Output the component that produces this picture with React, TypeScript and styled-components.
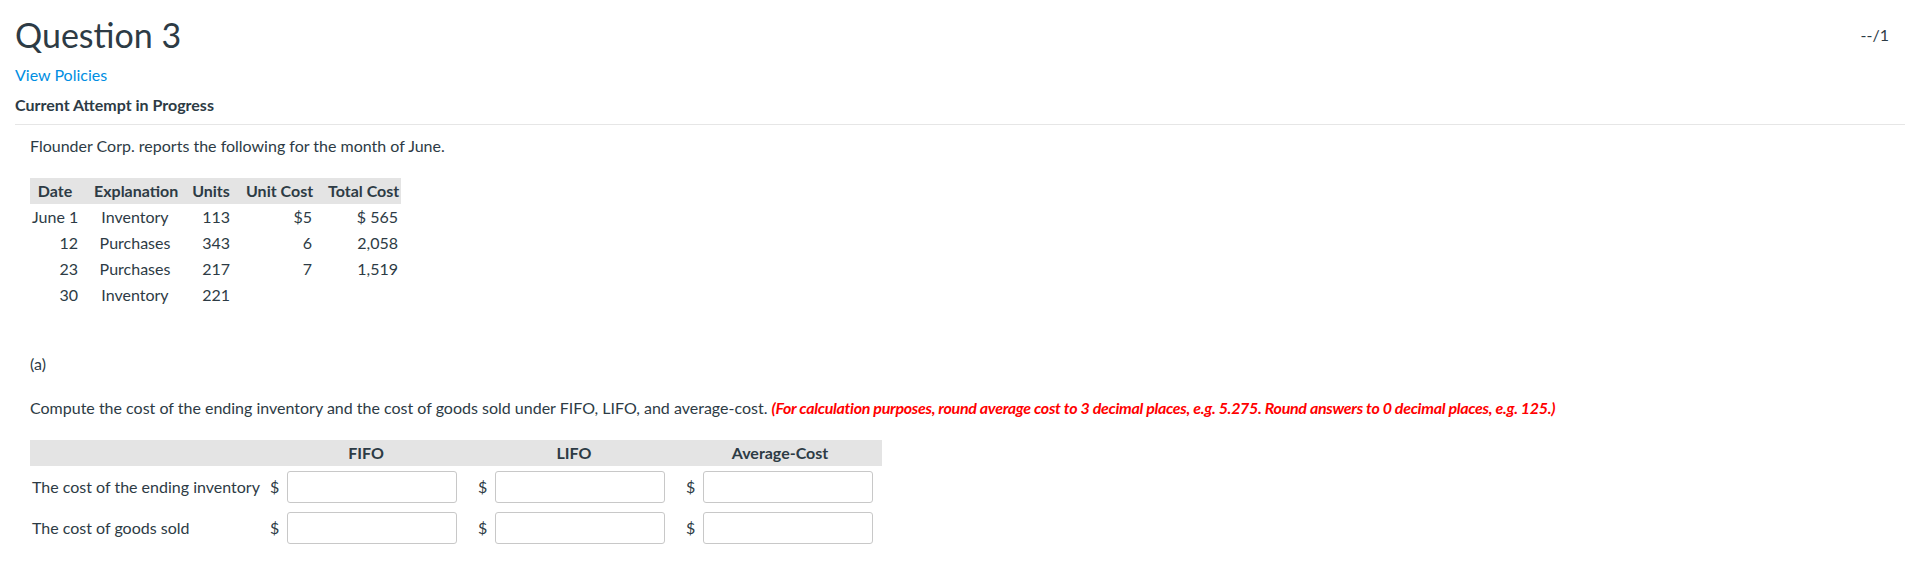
import styled, { createGlobalStyle } from "styled-components";

const GlobalStyle = createGlobalStyle`
    body {
        margin: 0;
        background: #ffffff;
        font-family: Lato, "Noto Sans", sans-serif;
        color: #2d3b45;
    }
`;

type Align = "left" | "center" | "right";

const inventoryRows = [
    { date: "June 1", explanation: "Inventory", units: "113", unitCost: "$5", totalCost: "$ 565" },
    { date: "12", explanation: "Purchases", units: "343", unitCost: "6", totalCost: "2,058" },
    { date: "23", explanation: "Purchases", units: "217", unitCost: "7", totalCost: "1,519" },
    { date: "30", explanation: "Inventory", units: "221", unitCost: "", totalCost: "" },
];

const answerRows = ["The cost of the ending inventory", "The cost of goods sold"];
const methods = ["FIFO", "LIFO", "Average-Cost"];

export default function App() {
    return (
        <>
            <GlobalStyle />
            <Page>
                <HeaderRow>
                    <Title>Question 3</Title>
                    <Points>--/1</Points>
                </HeaderRow>
                <PolicyLink href="#">View Policies</PolicyLink>
                <AttemptStatus>Current Attempt in Progress</AttemptStatus>
                <Divider />

                <QuestionBody>
                    <Paragraph>Flounder Corp. reports the following for the month of June.</Paragraph>

                    <DataTable>
                        <thead>
                            <tr>
                                <HeadCell $w={56} $pl={2} $pr={8}>Date</HeadCell>
                                <HeadCell $w={98} $pl={8} $pr={8}>Explanation</HeadCell>
                                <HeadCell $w={54} $pl={8} $pr={8}>Units</HeadCell>
                                <HeadCell $w={82} $pl={8} $pr={8}>Unit Cost</HeadCell>
                                <HeadCell $w={81} $pl={8} $pr={3}>Total Cost</HeadCell>
                            </tr>
                        </thead>
                        <tbody>
                            {inventoryRows.map((row, i) => (
                                <tr key={i}>
                                    <BodyCell $align="right" $pl={2} $pr={8}>{row.date}</BodyCell>
                                    <BodyCell $align="center" $pl={8} $pr={8}>{row.explanation}</BodyCell>
                                    <BodyCell $align="right" $pl={8} $pr={8}>{row.units}</BodyCell>
                                    <BodyCell $align="right" $pl={8} $pr={8}>{row.unitCost}</BodyCell>
                                    <BodyCell $align="right" $pl={8} $pr={3}>{row.totalCost}</BodyCell>
                                </tr>
                            ))}
                        </tbody>
                    </DataTable>

                    <PartLabel>(a)</PartLabel>

                    <Instructions>
                        Compute the cost of the ending inventory and the cost of goods sold under FIFO, LIFO, and average-cost.{" "}
                        <Hint>(For calculation purposes, round average cost to 3 decimal places, e.g. 5.275. Round answers to 0 decimal places, e.g. 125.)</Hint>
                    </Instructions>

                    <AnswerGrid>
                        <AnswerHead />
                        {methods.map((m) => (
                            <AnswerHead key={m}>{m}</AnswerHead>
                        ))}
                        {answerRows.map((label) => (
                            <AnswerRow key={label}>
                                <RowLabel>{label}</RowLabel>
                                {methods.map((m) => (
                                    <AnswerCell key={m}>
                                        <Dollar>$</Dollar>
                                        <AmountInput type="text" aria-label={`${label} ${m}`} />
                                    </AnswerCell>
                                ))}
                            </AnswerRow>
                        ))}
                    </AnswerGrid>
                </QuestionBody>
            </Page>
        </>
    );
}

const Page = styled.div`
    padding: 15px 15px 30px 15px;
    display: flex;
    flex-direction: column;
    align-items: flex-start;
`;

const HeaderRow = styled.div`
    width: 100%;
    display: flex;
    justify-content: space-between;
    align-items: flex-start;
`;

const Title = styled.h1`
    margin: 0;
    font-size: 34px;
    font-weight: 400;
    line-height: 40px;
    color: #2d3b45;
`;

const Points = styled.div`
    font-size: 16px;
    line-height: 20px;
    margin-top: 10px;
    margin-right: 16px;
    color: #2d3b45;
`;

const PolicyLink = styled.a`
    margin-top: 10px;
    font-size: 16px;
    line-height: 20px;
    color: #008ee2;
    text-decoration: none;
`;

const AttemptStatus = styled.div`
    margin-top: 10px;
    font-size: 16px;
    font-weight: 700;
    line-height: 20px;
    color: #2d3b45;
`;

const Divider = styled.hr`
    width: 100%;
    margin: 9px 0 0 0;
    border: none;
    border-top: 1px solid #e6e6e6;
`;

const QuestionBody = styled.div`
    padding-left: 15px;
    display: flex;
    flex-direction: column;
    align-items: flex-start;
`;

const Paragraph = styled.p`
    margin: 11px 0 0 0;
    font-size: 16px;
    line-height: 20px;
`;

const DataTable = styled.table`
    margin-top: 22px;
    border-collapse: collapse;
    table-layout: fixed;
    width: 371px;
    font-size: 16px;
`;

const HeadCell = styled.th<{ $w: number; $pl: number; $pr: number }>`
    width: ${(p) => p.$w}px;
    box-sizing: border-box;
    height: 26px;
    padding: 0 ${(p) => p.$pr}px 0 ${(p) => p.$pl}px;
    background: #e4e4e4;
    font-weight: 700;
    line-height: 26px;
    text-align: center;
    white-space: nowrap;
`;

const BodyCell = styled.td<{ $align: Align; $pl: number; $pr: number }>`
    height: 26px;
    padding: 0 ${(p) => p.$pr}px 0 ${(p) => p.$pl}px;
    line-height: 26px;
    text-align: ${(p) => p.$align};
    white-space: nowrap;
`;

const PartLabel = styled.div`
    margin-top: 46px;
    font-size: 16px;
    line-height: 20px;
`;

const Instructions = styled.p`
    margin: 24px 0 0 0;
    font-size: 16px;
    line-height: 20px;
`;

const Hint = styled.span`
    color: #ff0000;
    font-weight: 700;
    font-style: italic;
    letter-spacing: -0.3px;
`;

const AnswerGrid = styled.div`
    margin-top: 22px;
    display: grid;
    grid-template-columns: 232px 208px 208px 204px;
`;

const AnswerHead = styled.div`
    height: 26px;
    background: #e4e4e4;
    font-size: 16px;
    font-weight: 700;
    line-height: 26px;
    text-align: center;
`;

const AnswerRow = styled.div`
    display: contents;
`;

const RowLabel = styled.div`
    height: 41px;
    padding-left: 2px;
    display: flex;
    align-items: center;
    font-size: 16px;
    white-space: nowrap;
`;

const AnswerCell = styled.div`
    height: 41px;
    padding-left: 8px;
    display: flex;
    align-items: center;
`;

const Dollar = styled.span`
    font-size: 16px;
`;

const AmountInput = styled.input`
    box-sizing: border-box;
    width: 170px;
    height: 32px;
    margin-left: 8px;
    padding: 0 6px;
    border: 1px solid #c8c8c8;
    border-radius: 3px;
    font-family: Lato, sans-serif;
    font-size: 16px;
    background: #ffffff;
`;
